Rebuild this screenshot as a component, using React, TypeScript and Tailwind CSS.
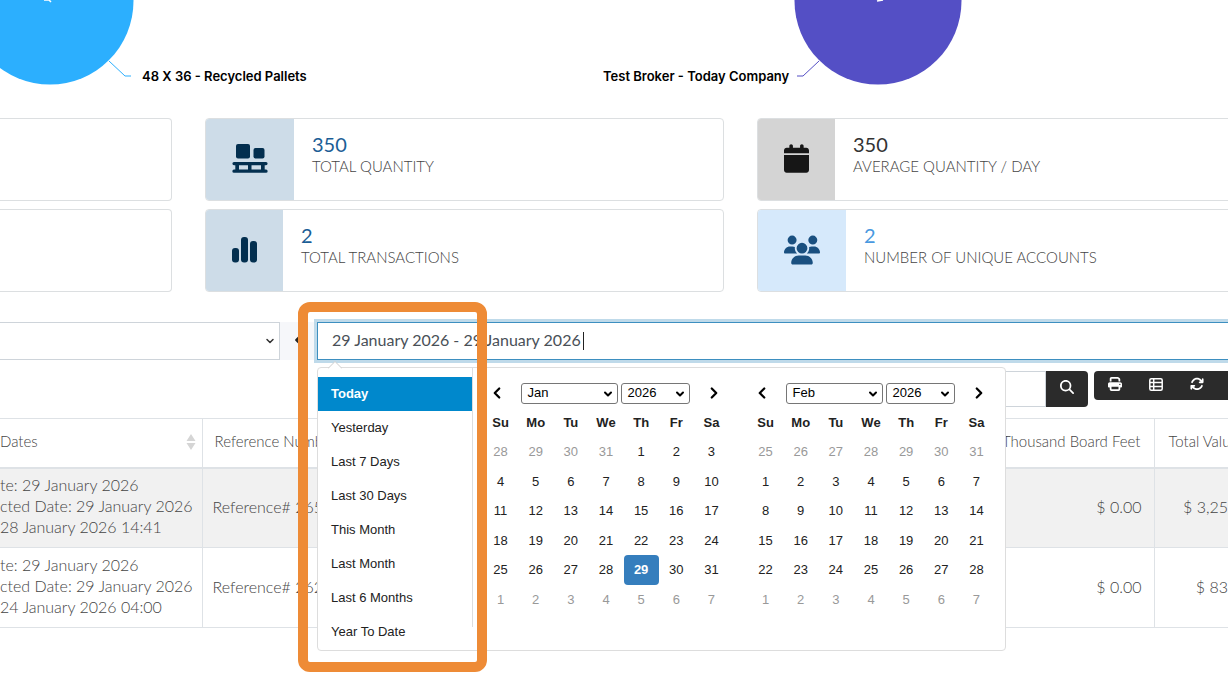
import { useState } from 'react';
import {
  FaCalendar,
  FaUsers,
  FaMagnifyingGlass,
  FaPrint,
  FaArrowsRotate,
} from 'react-icons/fa6';
import { ChevronDown, ChevronLeft, ChevronRight } from 'lucide-react';

interface Day {
  day: number;
  muted: boolean;
}

const ranges = [
  'Today',
  'Yesterday',
  'Last 7 Days',
  'Last 30 Days',
  'This Month',
  'Last Month',
  'Last 6 Months',
  'Year To Date',
];

const weekDays = ['Su', 'Mo', 'Tu', 'We', 'Th', 'Fr', 'Sa'];
const months = ['Jan', 'Feb', 'Mar', 'Apr', 'May', 'Jun', 'Jul', 'Aug', 'Sep', 'Oct', 'Nov', 'Dec'];

const rows = [
  {
    dates: ['te: 29 January 2026', 'cted Date: 29 January 2026', '28 January 2026 14:41'],
    reference: 'Reference# 265',
    boardFeet: '$ 0.00',
    total: '$ 3,25',
  },
  {
    dates: ['te: 29 January 2026', 'cted Date: 29 January 2026', '24 January 2026 04:00'],
    reference: 'Reference# 262',
    boardFeet: '$ 0.00',
    total: '$ 83',
  },
];

// always six weeks, padded with the neighbouring months
function getWeeks(year: number, month: number): Day[][] {
  const first = new Date(year, month, 1).getDay();
  const lead = first === 0 ? 7 : first;
  const weeks: Day[][] = [];
  for (let w = 0; w < 6; w++) {
    const week: Day[] = [];
    for (let d = 0; d < 7; d++) {
      const date = new Date(year, month, 1 - lead + w * 7 + d);
      week.push({ day: date.getDate(), muted: date.getMonth() !== month });
    }
    weeks.push(week);
  }
  return weeks;
}

function PalletIcon() {
  return (
    <svg viewBox="0 0 36 29" className="h-[29px] w-9" fill="currentColor">
      <rect x="4" y="0" width="14" height="14.5" rx="2" />
      <rect x="21.500" y="4" width="11" height="10.500" rx="2" />
      <path d="M2 18h32a1.500 1.500 0 0 1 0 3.200h-1.300v4.300h1.300a1.600 1.600 0 0 1 0 3.300h-32a1.600 1.600 0 0 1 0-3.300h1.300v-4.300H2a1.500 1.500 0 0 1 0-3.200zm5 3.200v4.300h9v-4.300zm12.500 0v4.300h9.500v-4.300z" fillRule="evenodd" />
    </svg>
  );
}

function BarsIcon() {
  return (
    <svg viewBox="0 0 25 26" className="h-[26px] w-[25px]" fill="currentColor">
      <rect x="0" y="11" width="7" height="14.500" rx="3" />
      <rect x="9" y="0" width="7" height="25.500" rx="3" />
      <rect x="18" y="4" width="7" height="21.500" rx="3" />
    </svg>
  );
}

function TableListIcon() {
  return (
    <svg viewBox="0 0 14 13" className="h-[13px] w-[14px]" fill="none" stroke="currentColor" strokeWidth="1.500">
      <rect x="0.800" y="0.800" width="12.400" height="11.400" rx="1.500" />
      <path d="M1 4.500h12M1 8.400h12M4.700 1v11" />
    </svg>
  );
}

function StatCard({ icon, value, label, iconClass, valueClass }: {
  icon: React.ReactNode;
  value: string;
  label: string;
  iconClass: string;
  valueClass: string;
}) {
  return (
    <div className="flex h-[83px] overflow-hidden rounded border border-[#dcdfe1] bg-white">
      <div className={`flex shrink-0 items-center px-[26px] pb-[2px] ${iconClass}`}>{icon}</div>
      <div className="px-[18px] pt-[13px] whitespace-nowrap">
        <div className={`text-[20px] leading-6 ${valueClass}`}>{value}</div>
        <div className="text-[15px] leading-5 font-light text-[#444]">{label}</div>
      </div>
    </div>
  );
}

function Calendar({ year, month, selected }: { year: number; month: number; selected?: number }) {
  return (
    <table className="w-[246px] table-fixed border-separate border-spacing-0 text-center text-[13px] leading-4 text-[#222]">
      <thead>
        <tr className="h-[30px]">
          <th>
            <button aria-label="Previous month" className="block pl-[5px]">
              <ChevronLeft size={18} strokeWidth={3} className="text-black" />
            </button>
          </th>
          <th colSpan={5}>
            <div className="flex justify-center gap-[3px] font-normal">
              <div className="relative">
                <select
                  aria-label="Month"
                  defaultValue={months[month]}
                  className="block h-[21px] w-[97px] appearance-none rounded-[3px] border border-[#767676] bg-white pl-[5px] text-black"
                >
                  {months.map(m => (
                    <option key={m}>{m}</option>
                  ))}
                </select>
                <ChevronDown size={12} strokeWidth={4} className="pointer-events-none absolute top-[5px] right-1 text-black" />
              </div>
              <div className="relative">
                <select
                  aria-label="Year"
                  defaultValue={year}
                  className="block h-[21px] w-[69px] appearance-none rounded-[3px] border border-[#767676] bg-white pl-[5px] text-black"
                >
                  <option>2025</option>
                  <option>2026</option>
                </select>
                <ChevronDown size={12} strokeWidth={4} className="pointer-events-none absolute top-[5px] right-1 text-black" />
              </div>
            </div>
          </th>
          <th>
            <button aria-label="Next month" className="block pl-[11px]">
              <ChevronRight size={18} strokeWidth={3} className="text-black" />
            </button>
          </th>
        </tr>
        <tr className="h-[29px]">
          {weekDays.map(d => (
            <th key={d} className="font-bold">{d}</th>
          ))}
        </tr>
      </thead>
      <tbody>
        {getWeeks(year, month).map((week, i) => (
          <tr key={i} className="odd:h-[30px] even:h-[29px]">
            {week.map(({ day, muted }) => (
              <td
                key={day}
                className={
                  !muted && day === selected
                    ? 'rounded bg-[#357ebd] font-bold text-white'
                    : muted
                      ? 'text-[#999]'
                      : ''
                }
              >
                {day}
              </td>
            ))}
          </tr>
        ))}
      </tbody>
    </table>
  );
}

function RangePicker() {
  const [active, setActive] = useState('Today');

  return (
    <div className="absolute top-[45px] left-0 z-10 flex h-[284px] w-[689px] rounded border border-[#ddd] bg-white font-['Liberation_Sans',Arial,sans-serif]">
      <svg viewBox="0 0 14 8" className="absolute -top-[7px] left-[10px] h-2 w-[14px]">
        <path d="M0 7.500L7 0.500l7 7" fill="#fff" stroke="#ccc" />
      </svg>
      <ul className="h-[259px] w-[155px] border-r border-[#ddd] pt-[9px]">
        {ranges.map(range => (
          <li key={range}>
            <button
              onClick={() => setActive(range)}
              className={`block h-[34px] w-full px-[13px] text-left text-[13px] ${
                range === active ? 'bg-[#0088cc] font-bold text-white' : 'text-[#222]'
              }`}
            >
              {range}
            </button>
          </li>
        ))}
      </ul>
      <div className="flex items-start gap-[19px] pt-[10px] pl-[10px]">
        <Calendar year={2026} month={0} selected={29} />
        <Calendar year={2026} month={1} />
      </div>
    </div>
  );
}

export default function App() {
  const [search, setSearch] = useState('');

  return (
    <div className="relative min-h-screen overflow-hidden bg-white font-[Lato,sans-serif]">
      <div className="grid grid-cols-[603fr_625fr] font-[Inter,sans-serif] text-[13px] leading-4 font-semibold text-black">
        <div className="flex">
          <svg viewBox="0 0 134 118" className="h-[118px] w-[134px] shrink-0">
            <circle cx="50" cy="1" r="83.500" fill="#2caffe" />
            <path d="M109 61l16 15h6" fill="none" stroke="#2caffe" />
            <path d="M44 0h5l2 2" fill="none" stroke="#fff" strokeWidth="1.500" />
          </svg>
          <span className="mt-[68px] ml-2">48 X 36 - Recycled Pallets</span>
        </div>
        <div className="flex">
          <span className="mt-[68px] mr-[5px]">Test Broker - Today Company</span>
          <svg viewBox="0 0 170 118" className="h-[118px] w-[170px] shrink-0">
            <circle cx="84" cy="1" r="83.500" fill="#544fc5" />
            <path d="M25 61l-16 15h-6" fill="none" stroke="#544fc5" />
            <path d="M83 1l6 -1" fill="none" stroke="#fff" strokeWidth="1.500" />
          </svg>
        </div>
      </div>

      <div className="grid grid-cols-[172fr_519fr_471fr] gap-x-[33px]">
        <div className="space-y-2">
          <div className="h-[83px] rounded-r border border-l-0 border-[#dcdfe1]" />
          <div className="h-[83px] rounded-r border border-l-0 border-[#dcdfe1]" />
        </div>
        <div className="space-y-2">
          <StatCard
            icon={<PalletIcon />}
            value="350"
            label="TOTAL QUANTITY"
            iconClass="bg-[#cddce8] text-[#032f4f]"
            valueClass="text-[#1b5e96]"
          />
          <StatCard
            icon={<BarsIcon />}
            value="2"
            label="TOTAL TRANSACTIONS"
            iconClass="bg-[#cddce8] text-[#032f4f]"
            valueClass="text-[#1b5e96]"
          />
        </div>
        <div className="-mr-12 space-y-2">
          <StatCard
            icon={<FaCalendar className="h-[29px] w-[25px]" />}
            value="350"
            label="AVERAGE QUANTITY / DAY"
            iconClass="bg-[#d4d4d4] text-[#161616]"
            valueClass="text-[#333]"
          />
          <StatCard
            icon={<FaUsers className="h-9 w-9" />}
            value="2"
            label="NUMBER OF UNIQUE ACCOUNTS"
            iconClass="bg-[#d6e9fb] text-[#1a5080]"
            valueClass="text-[#4a99e0]"
          />
        </div>
      </div>

      <div className="mt-[30px] flex h-[38px]">
        <div className="relative w-[280px]">
          <select aria-label="Filter" className="h-full w-full appearance-none border border-l-0 border-[#ced4da] bg-white" />
          <ChevronDown size={12} strokeWidth={3} className="pointer-events-none absolute top-[13px] right-1 text-[#333]" />
        </div>
        <button aria-label="Previous day" className="flex w-[37px] items-center bg-[#f6f7fa] pb-[3px] pl-[11px]">
          <ChevronLeft size={14} strokeWidth={4} className="text-[#222]" />
        </button>
        <div className="relative flex-1">
          <input
            type="text"
            aria-label="Date range"
            defaultValue="29 January 2026 - 29 January 2026"
            className="h-full w-[calc(100%+20px)] border border-[#3d8fc0] bg-white px-[14px] pb-1 text-[16px] text-[#495057] ring-3 ring-[#bfdaea]"
          />
          <span className="absolute top-[10px] left-[266px] h-[18px] w-px bg-[#222]" />
          <RangePicker />
        </div>
      </div>

      <div className="mt-[11px] flex h-9 items-start justify-end">
        <input
          type="search"
          aria-label="Search"
          value={search}
          onChange={(e) => setSearch(e.target.value)}
          className="h-9 w-[200px] border border-[#ced4da] px-3"
        />
        <button aria-label="Search" className="flex h-9 w-[42px] justify-center rounded-r bg-[#2b2b2b] pt-[9px] text-white">
          <FaMagnifyingGlass size={14} />
        </button>
        <div className="-mr-2 ml-[6px] flex h-[29px] w-[142px] gap-[27px] rounded bg-[#2b2b2b] pt-[6px] pl-[14px] text-white">
          <button aria-label="Print" className="h-[14px]"><FaPrint size={14} /></button>
          <button aria-label="Columns" className="h-[14px]"><TableListIcon /></button>
          <button aria-label="Refresh" className="h-[14px]"><FaArrowsRotate size={14} /></button>
        </div>
      </div>

      <table className="mt-[11px] w-full table-fixed border-collapse leading-[21px] font-light whitespace-nowrap text-[#444]">
        <colgroup>
          <col className="w-[202px]" />
          <col />
          <col className="w-[300px]" />
          <col className="w-[74px]" />
        </colgroup>
        <thead>
          <tr className="h-[49px] border-t border-b-2 border-[#dee2e6] text-left text-[15px]">
            <th className="border-r border-[#dee2e6] pb-[2px] font-light">
              <div className="flex items-center justify-between pr-[6px]">
                Dates
                <svg viewBox="0 0 10 16" className="h-4 w-[10px]" fill="#d5d5d5">
                  <path d="M5 0l4.500 7h-9zM5 16l4.500-7h-9z" />
                </svg>
              </div>
            </th>
            <th className="px-3 pb-[2px] font-light">Reference Number</th>
            <th className="border-r border-[#dee2e6] pr-[13px] pb-[2px] text-right font-light">Thousand Board Feet</th>
            <th className="pb-[2px] pl-[14px] font-light">Total Valu</th>
          </tr>
        </thead>
        <tbody>
          {rows.map((row, i) => (
            <tr key={i} className="h-20 border-b border-[#dee2e6] text-[16px] odd:bg-[#f1f1f1]">
              <td className="border-r border-[#dee2e6] pb-1">
                {row.dates.map(line => (
                  <div key={line}>{line}</div>
                ))}
              </td>
              <td className="px-[10px] pb-[2px]">{row.reference}</td>
              <td className="border-r border-[#dee2e6] pr-3 pb-[2px] text-right">{row.boardFeet}</td>
              <td className="pb-[2px] text-right">{row.total}</td>
            </tr>
          ))}
        </tbody>
      </table>

      {/* highlight around the preset ranges */}
      <div className="pointer-events-none absolute top-[302px] left-[298px] z-20 h-[370px] w-[189px] rounded-xl border-10 border-[#ee8b36]" />
    </div>
  );
}
